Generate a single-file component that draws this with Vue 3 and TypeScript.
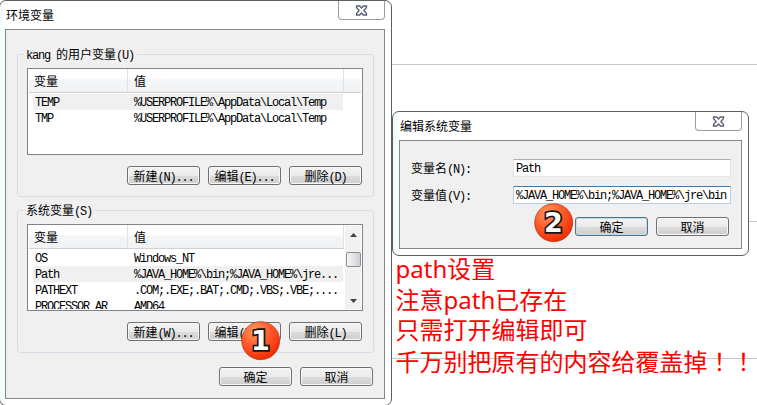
<script setup lang="ts">
import { h, type FunctionalComponent } from 'vue'

interface Row { name: string; value: string; selected?: boolean }
interface Group { title: string; rows: Row[]; buttons: string[]; scroll: boolean }

// Sets Latin runs in a half-width fixed pitch next to full-width Chinese characters.
const Txt: FunctionalComponent<{ s: string }> = (props) => {
  const runs = props.s.match(/[\x20-\x7e]+|[^\x20-\x7e]+/g) ?? []
  return h('span', { class: 'txt' }, runs.map((r) =>
    h('span', { class: /^[\x20-\x7e]/.test(r) ? 'half' : 'full' }, r)))
}
Txt.props = ['s']

const groups: Group[] = [
  {
    title: 'kang 的用户变量(U)',
    scroll: false,
    rows: [
      { name: 'TEMP', value: '%USERPROFILE%\\AppData\\Local\\Temp', selected: true },
      { name: 'TMP', value: '%USERPROFILE%\\AppData\\Local\\Temp' },
    ],
    buttons: ['新建(N)...', '编辑(E)...', '删除(D)'],
  },
  {
    title: '系统变量(S)',
    scroll: true,
    rows: [
      { name: 'OS', value: 'Windows_NT' },
      { name: 'Path', value: '%JAVA_HOME%\\bin;%JAVA_HOME%\\jre...', selected: true },
      { name: 'PATHEXT', value: '.COM;.EXE;.BAT;.CMD;.VBS;.VBE;....' },
      { name: 'PROCESSOR_AR', value: 'AMD64' },
    ],
    buttons: ['新建(W)...', '编辑(I)...', '删除(L)'],
  },
]

const fields = [
  { label: '变量名(N):', value: 'Path', focus: false },
  { label: '变量值(V):', value: '%JAVA_HOME%\\bin;%JAVA_HOME%\\jre\\bin', focus: true },
]

const notes = [
  { text: 'path设置', marks: '' },
  { text: '注意path已存在', marks: '' },
  { text: '只需打开编辑即可', marks: '' },
  { text: '千万别把原有的内容给覆盖掉', marks: '！！' },
]
</script>

<template>
  <main class="desk">
    <i class="rule r1"></i>
    <i class="rule r2"></i>
    <i class="rule r3"></i>

    <section class="win env">
      <header class="bar">
        <h1><Txt s="环境变量" /></h1>
        <span class="close">
          <svg width="13" height="11" viewBox="0 0 13 11"><path d="M1.5 1h3.2l1.8 2 1.8-2h3.2v1.5l-2.6 3 2.6 3V10H8.3L6.5 8 4.7 10H1.5V8.500l2.600-3-2.600-3z" /></svg>
        </span>
      </header>
      <div class="pane">
        <fieldset v-for="g in groups" :key="g.title">
          <legend><Txt :s="g.title" /></legend>
          <div class="list">
            <div class="table">
              <div class="head"><span><Txt s="变量" /></span><span><Txt s="值" /></span></div>
              <div class="body">
                <div v-for="r in g.rows" :key="r.name" class="row" :class="{ sel: r.selected }">
                  <Txt :s="r.name" /><Txt :s="r.value" />
                </div>
              </div>
            </div>
            <div v-if="g.scroll" class="scroll">
              <svg width="7" height="4" viewBox="0 0 7 4"><path d="M3.500 0L7 4H0z" /></svg>
              <i class="thumb"></i>
              <svg class="down" width="7" height="4" viewBox="0 0 7 4"><path d="M0 0h7L3.500 4z" /></svg>
            </div>
          </div>
          <div class="btns">
            <button v-for="b in g.buttons" :key="b"><Txt :s="b" /></button>
          </div>
        </fieldset>
        <div class="btns foot">
          <button><Txt s="确定" /></button>
          <button><Txt s="取消" /></button>
        </div>
      </div>
    </section>

    <section class="win edit">
      <header class="bar">
        <h1><Txt s="编辑系统变量" /></h1>
        <span class="close">
          <svg width="13" height="11" viewBox="0 0 13 11"><path d="M1.5 1h3.2l1.8 2 1.8-2h3.2v1.5l-2.6 3 2.6 3V10H8.3L6.5 8 4.7 10H1.5V8.500l2.600-3-2.600-3z" /></svg>
        </span>
      </header>
      <div class="pane">
        <div v-for="f in fields" :key="f.label" class="field">
          <Txt :s="f.label" />
          <span class="input" :class="{ focus: f.focus }"><Txt :s="f.value" /></span>
        </div>
        <div class="btns">
          <button class="default"><Txt s="确定" /></button>
          <button><Txt s="取消" /></button>
        </div>
      </div>
    </section>

    <div class="notes">
      <p v-for="n in notes" :key="n.text">{{ n.text }}<span v-if="n.marks" class="marks">{{ n.marks }}</span></p>
    </div>

    <svg class="badge b1" width="40" height="40" viewBox="0 0 40 40">
      <defs>
        <radialGradient id="ball" cx="0.35" cy="0.25" r="0.8">
          <stop offset="0" stop-color="#ff9a5c" />
          <stop offset="0.5" stop-color="#ff5a2c" />
          <stop offset="1" stop-color="#f02800" />
        </radialGradient>
      </defs>
      <circle cx="19.700" cy="19.700" r="19" />
      <text x="19.500" y="29">1</text>
    </svg>
    <svg class="badge b2" width="40" height="40" viewBox="0 0 40 40">
      <circle cx="19.700" cy="19.700" r="19" />
      <text x="19.500" y="29">2</text>
    </svg>
  </main>
</template>

<style>
body { background: #fff; overflow: hidden; }
.txt { display: block; white-space: pre; font-size: 12px; line-height: 16px; height: 16px; color: #000; }
.txt .full { font-family: "Noto Sans CJK SC", sans-serif; }
.txt .half { font-family: "Liberation Mono", monospace; letter-spacing: -1.2px; }
</style>

<style scoped>
* { box-sizing: border-box; }
.desk { position: relative; width: 757px; height: 405px; overflow: hidden; background: #fff; }
.rule { position: absolute; height: 1px; background: #c8c8c8; right: 0; left: 392px; }
.r1 { top: 64px; }
.r2 { top: 221px; }
.r3 { top: 358px; }

.win { position: absolute; background: #fff; border: 1px solid #5c5f62; border-radius: 7px; }
.env { left: -1px; top: 0; width: 393px; height: 406px; padding: 0 6px 0 5px; background: linear-gradient(90deg, #f1fbfe, #fff 6px); }
.edit { left: 392px; top: 111px; width: 357px; height: 145px; padding: 0 6px; background: linear-gradient(90deg, #f1fbfe, #fff 8px); }
.bar { display: flex; justify-content: space-between; align-items: flex-start; height: 28px; }
.bar h1 { margin: 0; padding: 6px 0 0 1px; font-weight: 400; }
.close { display: flex; justify-content: center; align-items: center; width: 47px; height: 19px; border: 1px solid #999ca0; border-top: 0; border-radius: 0 0 4px 4px; }
.close svg { fill: #fff; stroke: #586073; stroke-width: 1.3; }
.pane { background: #f0f0f0; border: 1px solid #868686; }
.env .pane { height: 370px; padding: 18px 10px 0 11px; }
.edit .pane { height: 109px; padding: 18px 10px 0 11px; }

fieldset { height: 149px; min-width: 0; margin: 0 0 7px; padding: 8px 10px 0 9px; border: 1px solid #d3dee8; border-radius: 3px; }
legend { display: flex; align-items: center; height: 12px; padding: 0 3px 0 2px; margin-left: -3px; }
.list { display: flex; height: 87px; border: 1px solid #7f838e; background: #fff; overflow: hidden; }
.table { flex: 1; min-width: 0; overflow: hidden; padding-bottom: 1px; }
.head { display: flex; height: 24px; margin: 0 1px; border-bottom: 1px solid #d2d2d2; background: linear-gradient(#fff 45%, #f5f6f8 46%, #f1f2f4); }
.head span { padding-top: 2px; }
.head > span { width: 216px; padding-left: 6px; border-right: 1px solid #e0e2e4; }
.head > span:first-child { width: 99px; padding-left: 5px; }
.body { height: 60px; padding: 1px 0 0 5px; overflow: hidden; }
.row { display: grid; grid-template-columns: 101px 1fr; width: 310px; height: 16px; padding-left: 2px; }
.row > :last-child { margin-left: -2px; }
.sel { background: #f0f0f0; }
.scroll { display: flex; flex-direction: column; align-items: center; width: 16px; margin: 1px 1px 1px 0; padding: 7px 0 6px; background: #f1f1f1; }
.scroll svg { fill: #444; }
.thumb { width: 15px; height: 15px; margin-top: 15px; border: 1px solid #8e8e8e; border-radius: 2px; background: linear-gradient(90deg, #f6f6f6, #e4e4e6 50%, #cfd0d3); }
.down { margin-top: auto; }

.btns { display: flex; justify-content: flex-end; gap: 8px; padding: 11px 1px 0 0; }
.foot { padding: 7px 1px 0 0; }
button { display: flex; justify-content: center; align-items: center; width: 73px; height: 19px; padding: 0; border: 1px solid #707070; border-radius: 3px; background: linear-gradient(#f3f3f3, #ebebeb 50%, #dcdcdc 51%, #cfcfcf); box-shadow: inset 0 0 0 1px #f8f8f8; }
.default { border-color: #59707d; box-shadow: inset 0 0 0 1px #b9dfee; }

.field { display: flex; justify-content: space-between; align-items: center; height: 18px; margin-bottom: 9px; }
.input { display: flex; align-items: center; width: 218px; height: 18px; padding-left: 2px; background: #fff; border: 1px solid #e2e6ec; border-top-color: #abadb3; border-radius: 1px; }
.focus { border-color: #b5d2ea; border-top-color: #3d7bad; }
.edit .btns { padding: 4px 2px 0 0; }

.notes { position: absolute; left: 395.500px; top: 254px; color: #f00; font: 24px/30.7px "Noto Sans", "Noto Sans CJK SC", sans-serif; white-space: nowrap; }
.notes p { margin: 0; height: 30.700px; }
.marks { font-family: "Noto Sans CJK TC", sans-serif; }
.badge { position: absolute; }
.b1 { left: 241px; top: 321px; }
.b2 { left: 534px; top: 203px; }
.badge circle { fill: url(#ball); stroke: #b83c20; stroke-width: 0.8; }
.badge text { font: bold 27px "DejaVu Sans", sans-serif; text-anchor: middle; fill: #fff; stroke: #151515; stroke-width: 3.4px; paint-order: stroke; }
</style>
